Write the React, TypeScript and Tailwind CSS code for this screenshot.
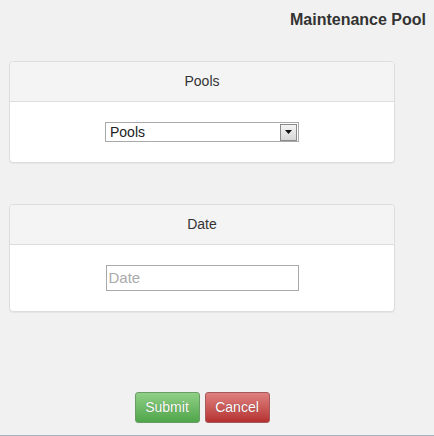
import { ReactNode } from 'react'

function Panel({ title, children }: { title: string; children: ReactNode }) {
  return (
    <div className="ml-[9px] w-[386px] rounded-[4px] border border-[#dddddd] bg-white shadow-[0_1px_1px_rgba(0,0,0,0.05)]">
      <div className="flex h-[40px] items-center justify-center rounded-t-[4px] border-b border-[#dddddd] bg-[#f4f4f4] text-[14px] text-[#333333]">
        {title}
      </div>
      <div className="flex justify-center">{children}</div>
    </div>
  )
}

export default function App() {
  return (
    <div
      className="relative h-[436px] w-[434px] overflow-hidden bg-[#f1f1f1]"
      style={{ fontFamily: '"Liberation Sans", Arial, sans-serif' }}
    >
      <div className="flex h-[38px] items-center justify-end pr-[8px] pt-[1px] text-[16px] font-bold text-[#333333]">
        Maintenance Pool
      </div>

      <div className="mt-[23px]">
        <Panel title="Pools">
          <div className="my-[20px] flex h-[20px] w-[194px] items-center border border-[#a9a9a9] bg-white">
            <span className="flex-1 pl-[4px] text-[14px] leading-none text-[#222222]">Pools</span>
            <span className="mr-[1px] flex h-[17px] w-[17px] items-center justify-center border border-[#8a8a8a] bg-gradient-to-b from-[#f4f4f4] to-[#d8d8d8]">
              <svg width="7" height="4" viewBox="0 0 7 4">
                <path d="M0 0h7L3.5 4z" fill="#111111" />
              </svg>
            </span>
          </div>
        </Panel>
      </div>

      <div className="mt-[41px]">
        <Panel title="Date">
          <div className="my-[20px] flex h-[26px] w-[193px] items-center border border-[#a9a9aa] bg-white pl-[2px] text-[15px] text-[#aaaaaa]">
            Date
          </div>
        </Panel>
      </div>

      <div className="ml-[9px] mt-[80px] flex w-[386px] justify-center gap-[5px]">
        <button className="h-[31px] w-[65px] rounded-[3px] border border-[#6a9d65] bg-gradient-to-b from-[#8fd086] to-[#4fa64a] text-[14px] text-white [text-shadow:0_0_1px_rgba(0,0,0,0.35)]">
          Submit
        </button>
        <button className="h-[31px] w-[65px] rounded-[3px] border border-[#a45a5a] bg-gradient-to-b from-[#de8080] to-[#b53030] text-[14px] text-white [text-shadow:0_0_1px_rgba(0,0,0,0.35)]">
          Cancel
        </button>
      </div>

      <div className="absolute bottom-0 left-0 h-[1px] w-full bg-[#a8b3bc]" />
    </div>
  )
}
